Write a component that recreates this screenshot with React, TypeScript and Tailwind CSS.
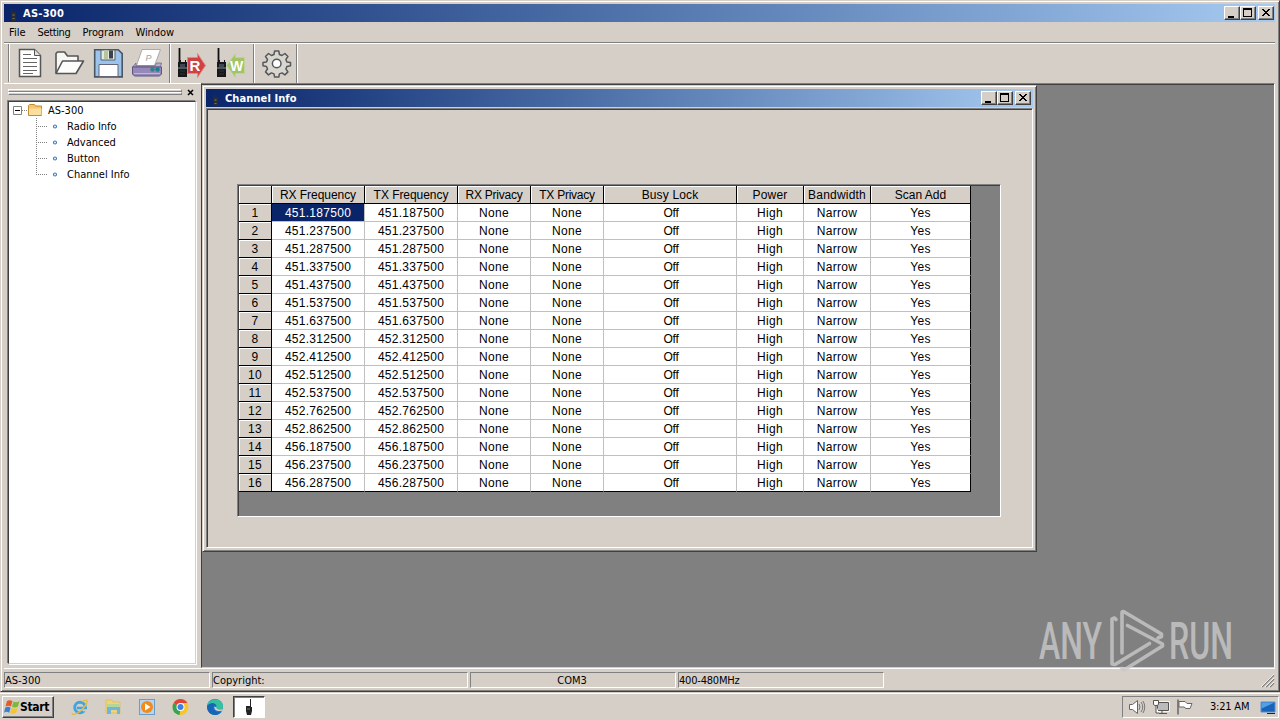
import type { ReactNode } from "react";

const columns = [
  { title: "RX Frequency", width: "w-[93px]", tracking: "tracking-[-0.05px]" },
  { title: "TX Frequency", width: "w-[93px]", tracking: "tracking-[-0.05px]" },
  { title: "RX Privacy", width: "w-[73px]", tracking: "tracking-[-0.25px]" },
  { title: "TX Privacy", width: "w-[73px]", tracking: "tracking-[-0.25px]" },
  { title: "Busy Lock", width: "w-[133px]", tracking: "tracking-[0.15px]" },
  { title: "Power", width: "w-[67px]", tracking: "tracking-[0.2px]" },
  { title: "Bandwidth", width: "w-[67px]", tracking: "tracking-[0.2px]" },
  { title: "Scan Add", width: "w-[100px]", tracking: "tracking-[0px]" },
];

const frequencies = [
  "451.187500",
  "451.237500",
  "451.287500",
  "451.337500",
  "451.437500",
  "451.537500",
  "451.637500",
  "452.312500",
  "452.412500",
  "452.512500",
  "452.537500",
  "452.762500",
  "452.862500",
  "456.187500",
  "456.237500",
  "456.287500",
];

const treeItems = ["Radio Info", "Advanced", "Button", "Channel Info"];

function CaptionButton({ children, className = "" }: { children: ReactNode; className?: string }) {
  return (
    <button
      className={`h-[14px] w-4 border border-t-white border-l-white border-r-[#404040] border-b-[#404040] bg-[#d5cfc8] shadow-[inset_-1px_-1px_0_#808080] ${className}`}
    >
      <svg className="block" width="14" height="12" viewBox="0 0 14 12" shapeRendering="crispEdges">
        {children}
      </svg>
    </button>
  );
}

function TitleBar({ title, className }: { title: string; className: string }) {
  return (
    <div
      className={`flex h-[18px] shrink-0 items-center bg-linear-to-r from-[#0a246a] to-[#a6caf0] ${className}`}
    >
      <svg className="mt-[3px] ml-[7px] block" width="6" height="12" viewBox="0 0 6 12">
        <path d="M1 0v5" stroke="#2b2f3a" />
        <rect x="0.5" y="3" width="4.5" height="9" fill="#2a2d30" />
        <rect x="1.5" y="5" width="2" height="2" fill="#55564a" />
        <rect x="1.5" y="9" width="2" height="1" fill="#77705a" />
      </svg>
      <span className="ml-[6px] flex-1 pt-px font-[DejaVu_Sans_Condensed,sans-serif] text-[11px] leading-[18px] font-bold text-white">
        {title}
      </span>
      <CaptionButton>
        <path d="M3 9h6v2H3z" fill="#000" />
      </CaptionButton>
      <CaptionButton className="mr-[2px]">
        <path d="M2 1h9v9H2zM3 3v6h7V3z" fill="#000" fillRule="evenodd" />
      </CaptionButton>
      <CaptionButton>
        <path
          d="M3 2h2v1h1v1h2V3h1V2h2v1h-1v1H9v1H8v1h1v1h1v1h1v1H9V8H8V7H6v1H5v1H3V8h1V7h1V6h1V5H5V4H4V3H3z"
          fill="#000"
        />
      </CaptionButton>
    </div>
  );
}

function Radio() {
  return (
    <g>
      <path d="M3.5 0v16" stroke="#111" strokeWidth="1.8" />
      <path d="M2 14h2v-2h1v2h4v-2h1v2h1v15H2z" fill="#16181b" />
      <path d="M2 20h9" stroke="#8795a0" />
      <rect x="4" y="16" width="5" height="3" fill="#3d4852" />
      <path d="M4 23h5M4 26h5" stroke="#333" />
    </g>
  );
}

function Separator() {
  return <div className="h-[39px] w-[2px] border-l border-[#808080] bg-white" />;
}

function Toolbar() {
  return (
    <div className="flex h-10 shrink-0 border-t border-white pl-1">
      <div className="h-[38px] w-[2px] border-l border-[#808080] bg-white" />
      {/* new */}
      <svg width="39" height="39" viewBox="10 44 39 39">
        <path d="M19.5 49.5h15l6 6v21h-21z" fill="#fff" stroke="#555" strokeWidth="1.5" />
        <path d="M34.5 49.5v6h6" fill="#ddd" stroke="#555" />
        <path d="M23 54.5h8M23 58.5h14M23 62.5h14M23 66.5h14M23 70.5h14M23 73.5h10" stroke="#666" />
      </svg>
      {/* open */}
      <svg width="39" height="39" viewBox="49 44 39 39">
        <path
          d="M56 73V53.5l1.5-1.5h7l3 4h10.5v6"
          fill="#f7f7f4"
          stroke="#555"
          strokeWidth="1.6"
          strokeLinejoin="round"
        />
        <path
          d="M56 73.5L62.5 61h21L76 73.5z"
          fill="#fdfdfb"
          stroke="#555"
          strokeWidth="1.6"
          strokeLinejoin="round"
        />
      </svg>
      {/* save */}
      <svg width="39" height="39" viewBox="88 44 39 39">
        <path d="M94.7 49.7h23.5l4 4v23.2H94.7z" fill="#9bc3ec" stroke="#4a5662" strokeWidth="1.6" />
        <path d="M101 50h14v10h-14z" fill="#e5e9df" stroke="#52616b" />
        <path d="M104 50h4v9h-4z" fill="#b5c69f" />
        <path d="M109 50.5h4v8h-4z" fill="#3c4249" />
        <path d="M99 64.5h19v12H99z" fill="#fff" stroke="#667" />
      </svg>
      {/* print */}
      <svg width="39" height="39" viewBox="127 44 39 39">
        <path d="M142 49.5h18.5l-6 16h-18z" fill="#fff" stroke="#aaa" />
        <text x="145.5" y="61" fontSize="9" fontStyle="italic" fontFamily="Liberation Sans" fill="#a3a3a3">
          P
        </text>
        <path d="M136 63l-3.5 4h28l1-4h-5l-1.5 3h-19z" fill="#b8acd0" stroke="#665d80" strokeWidth=".7" />
        <path d="M132.5 67h29v7l-2 2h-25l-2-2z" fill="#9688b8" stroke="#5f5580" />
        <circle cx="152.5" cy="69.5" r="2.2" fill="#28877e" />
        <circle cx="157.5" cy="69.5" r="2.2" fill="#1e7d8c" />
        <path d="M134 73.5h26" stroke="#c0b6d8" />
      </svg>
      <div className="w-[3px]" />
      <Separator />
      {/* read */}
      <svg width="40" height="39" viewBox="171 44 40 39">
        <path d="M187.5 57.5h10v-4l8 12-8 12v-4h-10z" fill="#cf4143" stroke="#e18a83" />
        <g transform="translate(176 48)">
          <Radio />
        </g>
        <text x="189.5" y="71" fontSize="15" fontWeight="900" fontFamily="Liberation Sans" fill="#fff">
          R
        </text>
      </svg>
      {/* write */}
      <svg width="40" height="39" viewBox="211 44 40 39">
        <path d="M244.5 57.5h-9v-4l-9 12 9 12v-4h9z" fill="#a2c366" stroke="#bfd494" />
        <g transform="translate(215 48)">
          <Radio />
        </g>
        <text x="230" y="71" fontSize="14" fontWeight="900" fontFamily="Liberation Sans" fill="#fff">
          W
        </text>
      </svg>
      <div className="w-[2px]" />
      <Separator />
      {/* options */}
      <svg width="41" height="39" viewBox="255 44 41 39">
        <g fill="#d9d6d0" stroke="#55585a" strokeWidth="1.5" strokeLinejoin="round">
          <path d="M274.6 51h4.2l.6 3.5 2.6 1 2.9-2 3 3-2 2.9 1 2.6 3.6.6v3.2l-3.6.6-1 2.6 2 2.9-3 3-2.9-2-2.6 1-.6 3.2h-4.2l-.6-3.2-2.6-1-2.9 2-3-3 2-2.9-1-2.6-3.5-.6v-3.2l3.5-.6 1-2.6-2-2.9 3-3 2.9 2 2.6-1z" />
          <circle cx="276.7" cy="63.5" r="4.3" fill="#fff" />
        </g>
      </svg>
      <Separator />
    </div>
  );
}

function Sidebar() {
  return (
    <aside className="flex w-[197px] shrink-0 flex-col border-t border-white pt-[5px] pl-1 font-[DejaVu_Sans_Condensed,sans-serif] text-[11px]">
      <div className="flex h-3">
        <div className="flex w-[174px] flex-col">
          <div className="h-[3px] border border-t-white border-l-white border-r-[#808080] border-b-[#808080]" />
          <div className="h-[3px] border border-t-white border-l-white border-r-[#808080] border-b-[#808080]" />
        </div>
        <svg className="ml-[5px]" width="8" height="7" viewBox="0 0 8 7">
          <path d="M1 1l5 5M6 1l-5 5" stroke="#000" strokeWidth="1.5" />
        </svg>
      </div>
      <div className="mr-[5px] h-[563px] border border-t-[#404040] border-r-[#d5cfc8] border-b-[#d5cfc8] border-l-[#404040] bg-white shadow-[-1px_-1px_0_#808080,1px_1px_0_#fff]">
        <div className="flex h-4 items-center pl-1">
          <svg width="32" height="16" viewBox="13 102 32 16">
            <path d="M13.5 106.5h8v8h-8z" fill="#fff" stroke="#808080" />
            <path d="M15 110.5h5" stroke="#000" />
            <path d="M22 110.5h6" stroke="#808080" strokeDasharray="1 1" />
            <path d="M28.5 115.5v-10l1-1h5l1 1.5h6v9.5z" fill="#f5c66b" stroke="#c48c31" />
            <path d="M29 108.5h12.5v6.5H29z" fill="#fcdf9f" />
          </svg>
          <span className="ml-[3px] pt-[2px]">AS-300</span>
        </div>
        {treeItems.map((item, i) => (
          <div key={item} className="flex h-4 items-center pl-[27px]">
            <svg width="24" height="16" viewBox="0 0 24 16">
              <path d={i === treeItems.length - 1 ? "M.5 0v9" : "M.5 0v16"} stroke="#808080" strokeDasharray="1 1" />
              <path d="M0 8.5h12" stroke="#808080" strokeDasharray="1 1" />
              <circle cx="19" cy="8.5" r="1.5" fill="#fff" stroke="#3a78c0" strokeWidth="1.1" />
            </svg>
            <span className="ml-[7px] pt-[2px]">{item}</span>
          </div>
        ))}
      </div>
    </aside>
  );
}

function ChannelGrid() {
  return (
    <div className="h-[333px] w-[764px] border border-t-[#808080] border-r-white border-b-white border-l-[#808080] bg-[#808080]">
      <div className="h-full w-full border-t border-l border-[#404040] font-['Liberation_Sans',sans-serif] text-[12px] leading-[19px]">
        <div className="flex">
          <div className="h-[18px] w-[33px] border-r border-b border-black bg-[#d5cfc8] shadow-[inset_1px_1px_0_#fff]" />
          {columns.map((col) => (
            <div
              key={col.title}
              className={`h-[18px] border-r border-b border-black bg-[#d5cfc8] text-center whitespace-nowrap shadow-[inset_1px_1px_0_#fff] ${col.width} ${col.tracking}`}
            >
              {col.title}
            </div>
          ))}
        </div>
        {frequencies.map((freq, row) => {
          const last = row === frequencies.length - 1;
          const cells = [freq, freq, "None", "None", "Off", "High", "Narrow", "Yes"];
          return (
            <div key={freq} className="flex">
              <div className="h-[18px] w-[33px] border-r border-b border-black bg-[#d5cfc8] text-center tracking-[0.3px] shadow-[inset_1px_1px_0_#fff]">
                {row + 1}
              </div>
              {cells.map((cell, i) => (
                <div
                  key={i}
                  className={`h-[18px] border-r border-b text-center ${columns[i].width} ${
                    cell === "Off" ? "pl-[2px] tracking-[-0.3px]" : "tracking-[0.28px]"
                  } ${last ? "border-b-black" : "border-b-[#c0c0c0]"} ${
                    i === cells.length - 1 ? "border-r-black" : "border-r-[#c0c0c0]"
                  } ${row === 0 && i === 0 ? "bg-[#0a246a] text-white" : "bg-white"}`}
                >
                  {cell}
                </div>
              ))}
            </div>
          );
        })}
      </div>
    </div>
  );
}

function ChannelWindow() {
  return (
    <div className="absolute top-0 left-0 flex h-[467px] w-[835px] flex-col border border-t-[#d5cfc8] border-r-[#404040] border-b-[#404040] border-l-[#d5cfc8] bg-[#d5cfc8] p-[3px] shadow-[inset_1px_1px_0_#fff,inset_-1px_-1px_0_#808080]">
      <TitleBar title="Channel Info" className="pr-[2px] tracking-[0.1px]" />
      <div className="mt-px flex-1 border border-t-[#808080] border-r-white border-b-white border-l-[#808080]">
        <div className="h-full border-t border-l border-[#404040] pt-[74px] pl-[29px]">
          <ChannelGrid />
        </div>
      </div>
    </div>
  );
}

function Watermark() {
  return (
    <svg
      className="absolute top-[595px] left-[1030px] overflow-visible"
      width="240"
      height="90"
      viewBox="1030 595 240 90"
    >
      <g fill="#c9c9c9" opacity="0.8" fontFamily="Roboto, sans-serif" fontSize="51" fontWeight="500">
        <text x="1039" y="659" textLength="63" lengthAdjust="spacingAndGlyphs">
          ANY
        </text>
        <text x="1169" y="659" textLength="64" lengthAdjust="spacingAndGlyphs">
          RUN
        </text>
      </g>
      <g
        fill="none"
        stroke="#c9c9c9"
        opacity="0.8"
        strokeWidth="3.6"
        strokeLinejoin="round"
        strokeLinecap="round"
      >
        <path d="M1116 619.5l-1.5-1.5-2.5 1v45l3 .5 34.5-21" />
        <path d="M1122 653V612l1.5-.5 38 22.5v2.5l-3.5 1.500" />
        <path d="M1127.5 625.500l35 18.500v2L1124 670l-2-1.500" />
      </g>
    </svg>
  );
}

function StatusBar() {
  const panel =
    "h-4 border border-t-[#808080] border-l-[#808080] border-r-white border-b-white leading-[15px] whitespace-nowrap";
  return (
    <div className="flex h-[22px] shrink-0 items-start gap-[2px] border-t border-white pt-[3px] font-[DejaVu_Sans_Condensed,sans-serif] text-[11px]">
      <div className={`w-[206px] ${panel}`}>AS-300</div>
      <div className={`w-[256px] ${panel}`}>Copyright:</div>
      <div className={`w-[206px] pr-[2px] text-center ${panel}`}>COM3</div>
      <div className={`w-[206px] tracking-[-0.2px] ${panel}`}>400-480MHz</div>
      <svg className="mt-[2px] ml-auto" width="14" height="14" viewBox="0 0 14 14">
        <path d="M1 13L13 1M5 13l8-8M9 13l4-4" stroke="#808080" strokeWidth="1.5" />
        <path d="M0 13L13 0M4 13l9-9M8 13l5-5" stroke="#fff" strokeWidth=".8" />
      </svg>
    </div>
  );
}

function Taskbar() {
  return (
    <div className="flex h-7 items-start border-t border-[#d5cfc8] bg-[#d5cfc8] font-[DejaVu_Sans_Condensed,sans-serif] text-[11px] shadow-[inset_0_1px_0_#fff]">
      <button className="mt-[3px] ml-[2px] flex h-[22px] w-[52px] items-center border border-t-white border-r-[#404040] border-b-[#404040] border-l-white text-[12px] font-bold shadow-[inset_-1px_-1px_0_#808080]">
        <svg className="ml-px" width="17" height="16" viewBox="0 0 17 16">
          <path d="M3 2c2-1.3 3.500-1 5.500 0L7 7.500c-2-1-3.500-1.200-5.500 0z" fill="#e65a25" />
          <path d="M9.500 2.500c2 1 3.500 1 6-.5L14 7.500c-2 1.300-4 1.300-6 .3z" fill="#7db83a" />
          <path d="M1.200 8.700c2-1.200 3.500-1 5.400 0l-1.400 5c-2-1-3.500-1.200-5.200 0z" fill="#3b7fd0" />
          <path d="M7.700 9c2 1 4 1 6-.3l-1.500 5c-2 1.300-4 1.300-6 .3z" fill="#f6c42d" />
        </svg>
        <span className="-ml-px tracking-[-0.3px]">Start</span>
      </button>
      {/* quick launch */}
      <svg className="mt-[3px]" width="179" height="22" viewBox="54 696 179 22">
        <circle cx="80" cy="707.5" r="5.3" fill="none" stroke="#43a5df" strokeWidth="3" />
        <path d="M77 708h10" stroke="#43a5df" strokeWidth="2.5" />
        <path d="M83 709.3h4v2h-4z" fill="#d5cfc8" />
        <path
          d="M72.5 713c-1 2 1.500 2 5 0 5-3 10-9 9.500-12-.3-1.300-3-.5-5 .7"
          fill="none"
          stroke="#e3bd45"
          strokeWidth="1.4"
        />
        <path d="M106 700h6l1 2h7v11h-14z" fill="#efd47d" stroke="#d6b552" strokeWidth=".6" />
        <path d="M107 704h12v3h-12z" fill="#b3d69a" />
        <path d="M107 707h13v7h-3v-4h-6v4h-4z" fill="#70b5dc" />
        <rect x="139.5" y="699.5" width="15" height="15" fill="#b7d6ee" stroke="#6a9dc9" />
        <circle cx="147" cy="707" r="6" fill="#f28a1c" />
        <path d="M145 703.5l5.500 3.500-5.500 3.500z" fill="#fff" />
        <circle cx="180.5" cy="707" r="8" fill="#f7c628" />
        <path d="M180.5 707l-6.900-4a8 8 0 0 0 6 12z" fill="#37a455" />
        <path d="M173.6 703a8 8 0 0 1 13.800 0h-7v4z" fill="#dc4537" />
        <circle cx="180.5" cy="707" r="4" fill="#fff" />
        <circle cx="180.5" cy="707" r="3" fill="#3f7fe6" />
        <circle cx="215" cy="707" r="8" fill="#1579c8" />
        <path d="M207 706c1-8 14-9 16-1 .7 4-2 5.500-5 5-2-.3-2.500-1-1.500-2.500 0-4-6-5-9.500-1.500z" fill="#35c1a0" />
        <path d="M207 706c4-5 9-3 9.500 0-4-1-5 3-1 5.500 3 1.500 5 1 6.500 0-5 6-15 4-15-5.500z" fill="#1765b5" />
        <path d="M214.5 706.5c-1 3.500 3 5.500 8 4v-1.500c-3 1.500-6 .5-6-1.500z" fill="#d5cfc8" />
      </svg>
      <div className="mt-[3px] h-[22px] w-8 border border-t-[#404040] border-r-white border-b-white border-l-[#404040] bg-white shadow-[inset_1px_1px_0_#808080]">
        <svg width="30" height="20" viewBox="234 697 30 20">
          <path d="M250.5 699v8" stroke="#222" />
          <path d="M246 706h5v1h1v4l-1 4h-4l-1-4z" fill="#202224" />
          <path d="M247 709h3" stroke="#777" />
        </svg>
      </div>
      <div className="mt-[3px] mr-px ml-auto flex h-[22px] w-[157px] items-center border border-t-[#808080] border-r-white border-b-white border-l-[#808080]">
        <svg width="78" height="20" viewBox="1123 697 78 20">
          <path d="M1129.5 704.5h3l5-4v13l-5-4h-3z" fill="#fff" stroke="#666" />
          <path d="M1139 704q2 3 0 6M1141 702q3.500 5 0 10M1143 701q3.500 6 0 12" fill="none" stroke="#777" />
          <path d="M1157.5 702.5h11v8h-11z" fill="#aaa" stroke="#fff" strokeWidth="2.5" />
          <path d="M1157.5 702.5h11v8h-11zM1159 713.5h8M1162 711v3" fill="#bbb" stroke="#555" />
          <path d="M1153.5 700.5h5v4l-1.500 1h-2l-1.500-1zM1156 705v8h3" fill="#fff" stroke="#555" />
          <path d="M1178 699.5v15" stroke="#555" strokeWidth="1.3" />
          <path d="M1179 701.5h6l2 2h5l-2 5h-4l-2-1.500h-5z" fill="#fff" stroke="#666" />
        </svg>
        <span className="w-[45px] pt-px pl-[9px] tracking-[-0.2px] whitespace-nowrap">3:21 AM</span>
        <svg className="ml-auto" width="18" height="20" viewBox="1260 697 18 20">
          <path d="M1261 702h14v10h-14z" fill="#1764bd" stroke="#5d8fc8" />
          <path d="M1261.5 702.5h13l-13 6z" fill="#55a0e5" />
          <path d="M1267 713h8v1h-8z" fill="#222" />
        </svg>
      </div>
    </div>
  );
}

export default function App() {
  return (
    <div className="relative h-[720px] w-[1280px] overflow-hidden bg-[#d5cfc8] text-black">
      <div className="flex h-[692px] w-[1280px] flex-col border border-t-[#d5cfc8] border-r-[#404040] border-b-[#404040] border-l-[#d5cfc8] pt-[3px] pr-1 pl-[3px] shadow-[inset_1px_1px_0_#fff,inset_-1px_-1px_0_#808080]">
        <TitleBar title="AS-300" className="pr-px tracking-[0.25px]" />
        <nav className="flex h-[21px] shrink-0 gap-3 border-b border-[#808080] pl-[5px] font-[DejaVu_Sans_Condensed,sans-serif] text-[11px] leading-[21px]">
          <span>File</span>
          <span className="tracking-[-0.35px]">Setting</span>
          <span className="tracking-[-0.1px]">Program</span>
          <span className="tracking-[-0.1px]">Window</span>
        </nav>
        <Toolbar />
        <div className="flex h-[585px] shrink-0">
          <Sidebar />
          <main className="flex-1 border border-t-[#808080] border-r-white border-b-[#d5cfc8] border-l-[#404040] bg-[#808080]">
            <div className="relative h-full border-t border-[#404040]">
              <ChannelWindow />
            </div>
          </main>
        </div>
        <StatusBar />
      </div>
      <Taskbar />
      <Watermark />
    </div>
  );
}
